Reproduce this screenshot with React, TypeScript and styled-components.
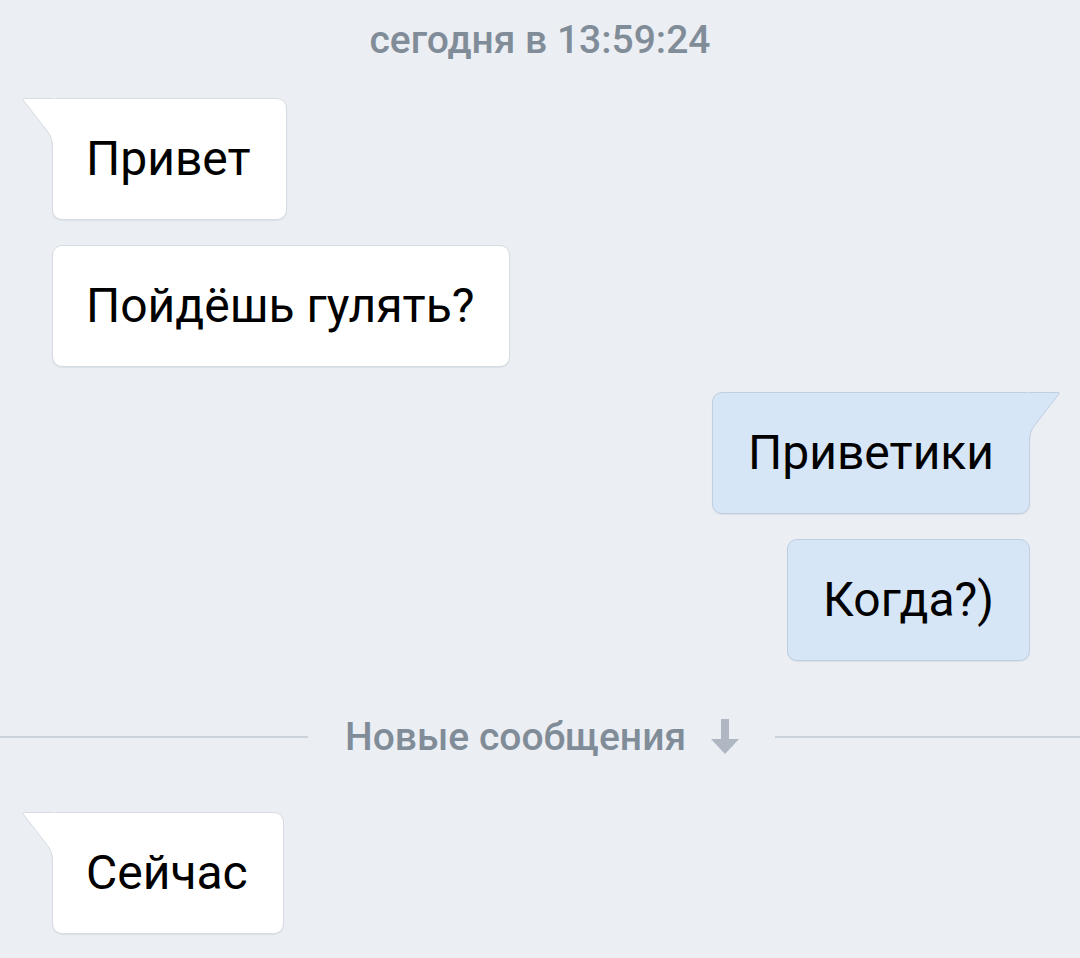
import React from "react";
import styled, { createGlobalStyle } from "styled-components";

const Global = createGlobalStyle`
  html, body { margin: 0; padding: 0; background: #ebeef2; }
  body { font-family: Roboto, "Noto Sans", "Liberation Sans", sans-serif; }
`;

const Page = styled.div`
  width: 1080px;
  min-height: 958px;
  background: #ebeef2;
  display: flex;
  flex-direction: column;
  overflow: hidden;
`;

const Timestamp = styled.div`
  margin-top: 18px;
  height: 44px;
  line-height: 44px;
  text-align: center;
  font-size: 39px;
  font-weight: 500;
  color: #818c99;
`;

const Feed = styled.div<{ $first?: boolean }>`
  display: flex;
  flex-direction: column;
  gap: 25px;
  padding: ${(p) => (p.$first ? "36px" : "0")} 20px 0 22px;
`;

const Row = styled.div<{ $out?: boolean }>`
  display: flex;
  justify-content: ${(p) => (p.$out ? "flex-end" : "flex-start")};
  padding-left: 30px;
  padding-right: 30px;
`;

const Bubble = styled.div<{ $out?: boolean; $tail?: boolean }>`
  position: relative;
  box-sizing: border-box;
  padding: ${(p) => (p.$out ? "30px 35px" : "30px 35px 30px 33px")};
  font-size: 48px;
  line-height: 60px;
  color: #000;
  background: ${(p) => (p.$out ? "#d7e6f7" : "#ffffff")};
  border: 1px solid ${(p) => (p.$out ? "#bfcee0" : "#d6dce3")};
  border-radius: 10px;
  box-shadow: 0 1px 1px rgba(40, 60, 90, 0.08);
  ${(p) =>
    p.$tail ? (p.$out ? "border-top-right-radius: 0;" : "border-top-left-radius: 0;") : ""}
  white-space: nowrap;
`;

const TailSvg = styled.svg<{ $out?: boolean }>`
  position: absolute;
  top: -1px;
  width: 33px;
  height: 52px;
  overflow: visible;
  ${(p) => (p.$out ? "right: -31px; transform: scaleX(-1);" : "left: -31px;")}
`;

function Tail({ out }: { out?: boolean }) {
  const fill = out ? "#d7e6f7" : "#ffffff";
  const stroke = out ? "#bfcee0" : "#d6dce3";
  return (
    <TailSvg $out={out} viewBox="0 0 33 52">
      <path
        d="M1.2,0.5 L33,0.5 L33,52 L30.5,52 L30.5,49 C30.5,43 29,37.5 25.5,33.5 L1,1.8 Z"
        fill={fill}
      />
      <path
        d="M30.5,52 L30.5,49 C30.5,43 29,37.5 25.5,33.5 L1,1.8 Q0.2,0.5 1.6,0.5 L31,0.5"
        fill="none"
        stroke={stroke}
        strokeWidth="1"
      />
    </TailSvg>
  );
}

const Divider = styled.div`
  display: flex;
  align-items: center;
  height: 50px;
  margin: 51px 0 50px;
`;

const Line = styled.div<{ $fixed?: boolean }>`
  flex: ${(p) => (p.$fixed ? "0 0 308px" : "1")};
  height: 2px;
  background: #cbd2da;
`;

const DividerLabel = styled.div`
  display: flex;
  align-items: center;
  gap: 24px;
  padding: 0 35px 0 37px;
  font-size: 39px;
  font-weight: 500;
  color: #818c99;
`;

const Arrow = styled.svg`
  width: 30px;
  height: 36px;
  display: block;
`;

function Message({ text, out, tail }: { text: string; out?: boolean; tail?: boolean }) {
  return (
    <Row $out={out}>
      <Bubble $out={out} $tail={tail}>
        {tail && <Tail out={out} />}
        {text}
      </Bubble>
    </Row>
  );
}

export default function App() {
  return (
    <>
      <Global />
      <Page>
        <Timestamp>сегодня в 13:59:24</Timestamp>
        <Feed $first>
          <Message text="Привет" tail />
          <Message text="Пойдёшь гулять?" />
          <Message text="Приветики" out tail />
          <Message text="Когда?)" out />
        </Feed>
        <Divider>
          <Line $fixed />
          <DividerLabel>
            Новые сообщения
            <Arrow viewBox="0 0 30 36">
              <path d="M11 0 H19 V20 H29 L15 35 L1 20 H11 Z" fill="#aeb7c2" />
            </Arrow>
          </DividerLabel>
          <Line />
        </Divider>
        <Feed>
          <Message text="Сейчас" tail />
        </Feed>
      </Page>
    </>
  );
}
